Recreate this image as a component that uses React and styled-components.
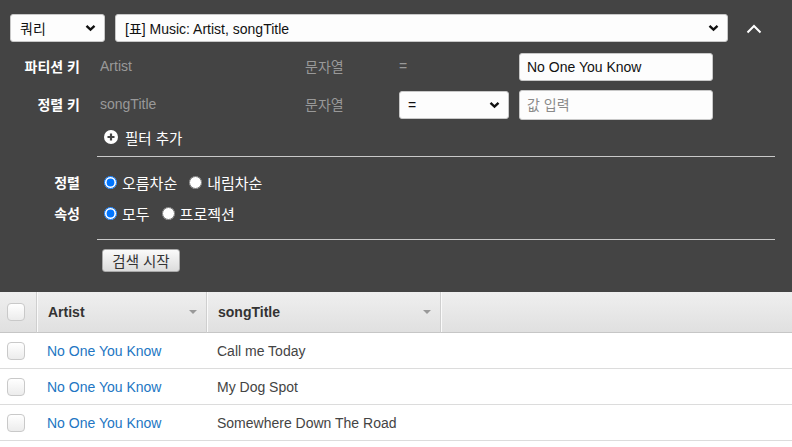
import React from 'react'
import styled, { createGlobalStyle } from 'styled-components'

const Global = createGlobalStyle`
  body {
    margin: 0;
    background: #fff;
    font-family: "Liberation Sans", "Noto Sans CJK KR", sans-serif;
    font-size: 14px;
  }
`

const Panel = styled.div`
  background: #444444;
  padding: 14px 0 20px 0;
  height: 292px;
  box-sizing: border-box;
`

const TopRow = styled.div`
  display: flex;
  align-items: center;
  gap: 10px;
  padding-left: 10px;
`

const SelectBox = styled.div`
  display: flex;
  align-items: center;
  justify-content: space-between;
  box-sizing: border-box;
  width: ${p => p.$w}px;
  height: 28px;
  padding: 0 8px 0 ${p => p.$pl || 9}px;
  background: #fdfdfd;
  border: 1px solid #c8c8c8;
  border-radius: 3px;
  color: #111;
  font-size: 14px;
`

const Collapse = styled.div`
  width: 26px;
  margin-left: 3px;
  margin-top: 2px;
  display: flex;
  justify-content: center;
`

const KeyGrid = styled.div`
  display: grid;
  grid-template-columns: 100px 205px 94px 120px 194px;
  grid-auto-rows: 28px;
  row-gap: 10px;
  margin-top: 11px;
  align-items: center;
`

const Label = styled.div`
  color: #fff;
  font-weight: bold;
  text-align: right;
  padding-right: 20px;
  margin-top: ${p => (p.$raise ? -2 : 0)}px;
`

const Muted = styled.div`
  color: #999;
  margin-top: -2px;
`

const TextInput = styled.input`
  box-sizing: border-box;
  width: 194px;
  height: ${p => p.$h || 28}px;
  border: 1px solid #c8c8c8;
  border-radius: 3px;
  background: #fdfdfd;
  padding: 0 7px;
  font-family: "Liberation Sans", "Noto Sans CJK KR", sans-serif;
  font-size: 14px;
  color: #111;
  &::placeholder { color: #8a8a8a; }
`

const AddFilter = styled.div`
  display: flex;
  align-items: center;
  gap: 7px;
  margin: 8px 0 0 104px;
  color: #fff;
  font-size: 14.5px;
  height: 20px;
`

const Divider = styled.div`
  margin-left: 97px;
  width: 678px;
  border-top: 1px solid #c9c9c9;
  margin-top: ${p => p.$mt}px;
`

const OptGrid = styled.div`
  display: grid;
  grid-template-columns: 100px auto;
  grid-auto-rows: 22px;
  row-gap: 9px;
  margin-top: 14px;
  align-items: center;
`

const Radios = styled.div`
  display: flex;
  align-items: center;
  color: #fff;
  padding-left: 4px;
  font-size: 15px;
`

const RadioLabel = styled.label`
  display: flex;
  align-items: center;
  margin-right: 12px;
  input {
    margin: 0 5px 0 0;
    width: 13px;
    height: 13px;
  }
`

const SearchButton = styled.button`
  margin: 9px 0 0 102px;
  height: 23px;
  width: 78px;
  box-sizing: border-box;
  border: 1px solid #a9a9a9;
  border-radius: 3px;
  background: linear-gradient(#fafafa, #dcdcdc);
  color: #333;
  font-family: "Liberation Sans", "Noto Sans CJK KR", sans-serif;
  font-size: 14.5px;
  padding: 0;
`

const Table = styled.div`
  display: grid;
  grid-template-columns: 37px 170px 234px 1fr;
`

const HeadCell = styled.div`
  height: 41px;
  box-sizing: border-box;
  display: flex;
  align-items: center;
  justify-content: space-between;
  padding: 0 ${p => (p.$check ? 0 : 9)}px 0 ${p => (p.$check ? 7 : 11)}px;
  background: linear-gradient(#efefef, #e0e0e0);
  border-bottom: 1px solid #c6c6c6;
  border-right: ${p => (p.$last ? 'none' : '1px solid #cfcfcf')};
  box-shadow: ${p => (p.$first ? 'none' : 'inset 1px 0 0 #fafafa')};
  font-weight: bold;
  color: #333;
`

const Cell = styled.div`
  height: 36px;
  box-sizing: border-box;
  display: flex;
  align-items: center;
  padding-left: ${p => (p.$check ? 7 : 10)}px;
  border-bottom: 1px solid #dcdcdc;
  color: ${p => (p.$link ? '#2276c3' : '#444')};
`

const Check = styled.span`
  width: 18px;
  height: 18px;
  box-sizing: border-box;
  border: 1px solid #c9c9c9;
  border-radius: 4px;
  background: linear-gradient(#ffffff, #ececec);
`

const Caret = () => (
  <svg width="8" height="5" viewBox="0 0 8 5">
    <path d="M0 0 L8 0 L4 4 Z" fill="#999" />
  </svg>
)

const ChevronDown = () => (
  <svg width="11" height="8" viewBox="0 0 11 8">
    <path d="M1.5 1.8 L5.5 5.6 L9.5 1.8" stroke="#111" strokeWidth="2.4" fill="none" />
  </svg>
)

const ChevronUp = () => (
  <svg width="16" height="10" viewBox="0 0 16 10">
    <path d="M1.5 8.5 L8 2 L14.5 8.5" stroke="#fff" strokeWidth="2" fill="none" />
  </svg>
)

const PlusCircle = () => (
  <svg width="14" height="14" viewBox="0 0 14 14">
    <circle cx="7" cy="7" r="7" fill="#fff" />
    <path d="M7 3.5 V10.5 M3.5 7 H10.5" stroke="#444" strokeWidth="2.2" />
  </svg>
)

const rows = ['Call me Today', 'My Dog Spot', 'Somewhere Down The Road']

export default function App() {
  return (
    <>
      <Global />
      <Panel>
        <TopRow>
          <SelectBox $w={95}>쿼리<ChevronDown /></SelectBox>
          <SelectBox $w={613}>[표] Music: Artist, songTitle<ChevronDown /></SelectBox>
          <Collapse><ChevronUp /></Collapse>
        </TopRow>

        <KeyGrid>
          <Label $raise>파티션 키</Label>
          <Muted>Artist</Muted>
          <Muted>문자열</Muted>
          <Muted>=</Muted>
          <TextInput defaultValue="No One You Know" />

          <Label $raise>정렬 키</Label>
          <Muted>songTitle</Muted>
          <Muted>문자열</Muted>
          <SelectBox $w={110} $pl={8}>=<ChevronDown /></SelectBox>
          <TextInput $h={30} placeholder="값 입력" />
        </KeyGrid>

        <AddFilter><PlusCircle />필터 추가</AddFilter>
        <Divider $mt={9} />

        <OptGrid>
          <Label>정렬</Label>
          <Radios>
            <RadioLabel><input type="radio" name="order" defaultChecked />오름차순</RadioLabel>
            <RadioLabel><input type="radio" name="order" />내림차순</RadioLabel>
          </Radios>
          <Label>속성</Label>
          <Radios>
            <RadioLabel><input type="radio" name="attr" defaultChecked />모두</RadioLabel>
            <RadioLabel><input type="radio" name="attr" />프로젝션</RadioLabel>
          </Radios>
        </OptGrid>

        <Divider $mt={15} />
        <SearchButton>검색 시작</SearchButton>
      </Panel>

      <Table>
        <HeadCell $check $first><Check /></HeadCell>
        <HeadCell>Artist<Caret /></HeadCell>
        <HeadCell>songTitle<Caret /></HeadCell>
        <HeadCell $last />
        {rows.map(title => (
          <React.Fragment key={title}>
            <Cell $check><Check /></Cell>
            <Cell $link>No One You Know</Cell>
            <Cell>{title}</Cell>
            <Cell />
          </React.Fragment>
        ))}
      </Table>
    </>
  )
}
